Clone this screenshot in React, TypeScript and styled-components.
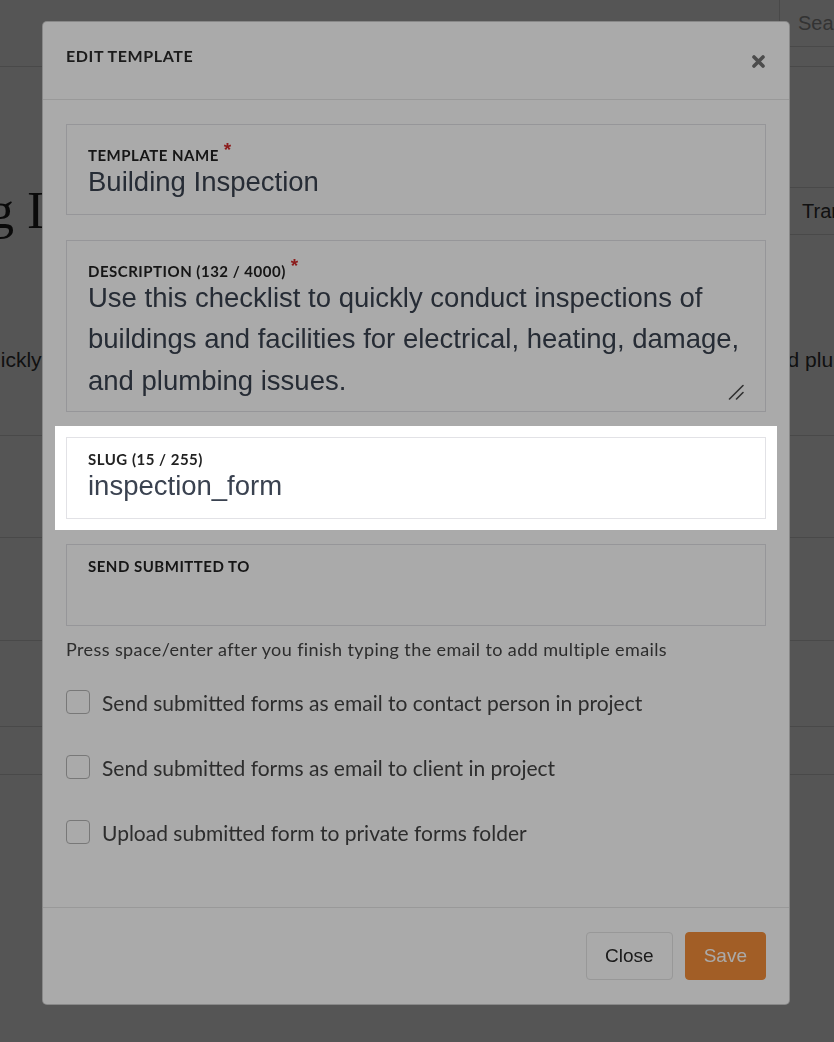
import React from "react";
import styled, { createGlobalStyle } from "styled-components";

const GlobalStyle = createGlobalStyle`
  html, body { margin: 0; padding: 0; }
  body {
    font-family: "Liberation Sans", Arial, sans-serif;
    background: #fff;
    overflow: hidden;
  }
  * { box-sizing: border-box; }
`;

/* ---------- background page ---------- */

const Page = styled.div`
  height: 1042px;
  overflow: hidden;
  background: #fff;
  color: #333;
`;

const TopBar = styled.header`
  height: 67px;
  border-bottom: 1px solid #dcdcdc;
  display: flex;
  justify-content: flex-end;
  align-items: flex-start;
`;

const SearchBox = styled.div`
  width: 55px;
  height: 47px;
  border-left: 1px solid #dcdcdc;
  border-bottom: 1px solid #dcdcdc;
  padding-left: 18px;
  font-size: 20px;
  line-height: 46px;
  color: #9a9a9a;
  white-space: nowrap;
  overflow: hidden;
`;

const TitleRow = styled.div`
  margin-top: 120px;
  height: 48px;
  display: flex;
  align-items: center;
  justify-content: space-between;
`;

const PageTitle = styled.h1`
  margin: 0 0 0 -168px;
  font-family: "Liberation Serif", "Times New Roman", serif;
  font-weight: 400;
  font-size: 52px;
  line-height: 48px;
  color: #1e1e1e;
  white-space: nowrap;
`;

const TransferButton = styled.div`
  flex-shrink: 0;
  width: 49px;
  height: 48px;
  border: 1px solid #dcdcdc;
  border-right: 0;
  padding-left: 16px;
  font-size: 20px;
  line-height: 46px;
  color: #333;
  white-space: nowrap;
  overflow: hidden;
`;

const Intro = styled.p`
  margin: 110px 0 0 -214px;
  font-size: 21px;
  line-height: 30px;
  color: #333;
  white-space: nowrap;
`;

const Table = styled.div`
  margin-top: 60px;
  border-top: 1px solid #dcdcdc;
`;

const TableRow = styled.div<{ $h: number }>`
  height: ${(p) => p.$h}px;
  border-bottom: 1px solid #dcdcdc;
`;

/* ---------- modal ---------- */

const Backdrop = styled.div`
  position: fixed;
  inset: 0;
  z-index: 10;
  background: rgba(0, 0, 0, 0.5);
  padding-top: 21px;
`;

const Modal = styled.div`
  width: 748px;
  height: 984px;
  margin-left: 42px;
  background: #fff;
  border: 1px solid rgba(0, 0, 0, 0.2);
  border-radius: 5px;
  display: flex;
  flex-direction: column;
  font-family: Lato, "Open Sans", sans-serif;
`;

const ModalHeader = styled.div`
  height: 78px;
  flex-shrink: 0;
  border-bottom: 1px solid #e6e6e6;
  padding: 24px 24px 0 23px;
  display: flex;
  align-items: flex-start;
  justify-content: space-between;
`;

const ModalTitle = styled.h4`
  margin: 0;
  font-family: Lato, sans-serif;
  font-weight: 700;
  font-size: 16px;
  line-height: 20px;
  letter-spacing: 0.6px;
  color: #2b2b2b;
  text-transform: uppercase;
`;

const CloseX = styled.button`
  margin-top: 9px;
  padding: 0;
  border: 0;
  background: transparent;
  width: 13px;
  height: 13px;
  display: flex;
  cursor: pointer;
`;

const ModalBody = styled.div`
  flex: 1;
  padding: 24px 23px 0;
  display: flex;
  flex-direction: column;
`;

const FieldStack = styled.div`
  display: flex;
  flex-direction: column;
  gap: 25px;
`;

const FieldBox = styled.div<{ $highlight?: boolean }>`
  position: relative;
  background: #fff;
  border: 1px solid #e2e2e6;
  padding: 12px 21px 14px;
  ${(p) =>
    p.$highlight &&
    `
    z-index: 1;
    box-shadow: 0 0 0 11px #fff, 0 0 0 3000px rgba(0, 0, 0, 0.333);
  `}
`;

const Label = styled.label<{ $required?: boolean }>`
  display: block;
  padding-top: ${(p) => (p.$required ? 9 : 0)}px;
  font-family: Lato, sans-serif;
  font-weight: 700;
  font-size: 15px;
  line-height: 18px;
  letter-spacing: 0.5px;
  color: #222;
  text-transform: uppercase;
`;

const Asterisk = styled.span`
  margin-left: 5px;
  font-family: "Liberation Sans", Arial, sans-serif;
  font-weight: 700;
  font-size: 19px;
  line-height: 0;
  vertical-align: 5px;
  color: #d22b2b;
`;

const ValueInput = styled.input`
  display: block;
  width: 100%;
  height: 36px;
  margin: 0;
  padding: 0;
  border: 0;
  outline: none;
  background: transparent;
  font-family: "Liberation Sans", Arial, sans-serif;
  font-size: 27.5px;
  line-height: 36px;
  color: #3a4250;
`;

const ValueArea = styled.textarea`
  display: block;
  width: 100%;
  height: 124px;
  margin: -3px 0 -4px;
  padding: 0;
  border: 0;
  outline: none;
  background: transparent;
  overflow: hidden;
  resize: none;
  font-family: "Liberation Sans", Arial, sans-serif;
  font-size: 27.5px;
  line-height: 1.5;
  color: #3a4250;
`;

const ResizeGrip = styled.svg`
  position: absolute;
  right: 21px;
  bottom: 11px;
  width: 16px;
  height: 16px;
  pointer-events: none;
`;

const Helper = styled.p`
  margin: 11px 0 0;
  font-size: 18px;
  line-height: 24px;
  letter-spacing: 0.4px;
  color: #444;
`;

const CheckList = styled.div`
  margin-top: 29px;
  display: flex;
  flex-direction: column;
  gap: 41px;
`;

const CheckRow = styled.label`
  display: flex;
  align-items: center;
  gap: 12px;
  height: 24px;
  font-size: 21px;
  color: #444;
`;

const CheckBox = styled.input.attrs({ type: "checkbox" })`
  appearance: none;
  flex-shrink: 0;
  width: 24px;
  height: 24px;
  margin: 0;
  border: 1px solid #b5b5b5;
  border-radius: 4px;
  background: #fff;
`;

const ModalFooter = styled.div`
  height: 97px;
  flex-shrink: 0;
  border-top: 1px solid #e6e6e6;
  padding: 24px 23px 0;
  display: flex;
  justify-content: flex-end;
  align-items: flex-start;
  gap: 12px;
`;

const Button = styled.button<{ $primary?: boolean }>`
  height: 48px;
  padding: 0 18px;
  border-radius: 4px;
  font-family: "Liberation Sans", Arial, sans-serif;
  font-size: 19px;
  border: 1px solid ${(p) => (p.$primary ? "#f48e39" : "#e4e4e4")};
  background: ${(p) => (p.$primary ? "#f48e39" : "#fff")};
  color: ${(p) => (p.$primary ? "#fff" : "#2a2a2a")};
  cursor: pointer;
`;

const description =
  "Use this checklist to quickly conduct inspections of buildings and facilities for electrical, heating, damage, and plumbing issues.";

export default function App() {
  return (
    <>
      <GlobalStyle />
      <Page>
        <TopBar>
          <SearchBox>Search</SearchBox>
        </TopBar>
        <TitleRow>
          <PageTitle>Building Inspection</PageTitle>
          <TransferButton>Transfer</TransferButton>
        </TitleRow>
        <Intro>{description}</Intro>
        <Table>
          {[102, 103, 86, 48].map((h, i) => (
            <TableRow key={i} $h={h} />
          ))}
        </Table>
      </Page>

      <Backdrop>
        <Modal>
          <ModalHeader>
            <ModalTitle>Edit Template</ModalTitle>
            <CloseX aria-label="Close">
              <svg width="13" height="13" viewBox="0 0 13 13">
                <path
                  d="M2 2 L11 11 M11 2 L2 11"
                  stroke="#737373"
                  strokeWidth="3.6"
                  strokeLinecap="round"
                />
              </svg>
            </CloseX>
          </ModalHeader>

          <ModalBody>
            <FieldStack>
              <FieldBox>
                <Label $required>
                  Template Name<Asterisk>*</Asterisk>
                </Label>
                <ValueInput defaultValue="Building Inspection" />
              </FieldBox>
              <FieldBox>
                <Label $required>
                  Description (132 / 4000)<Asterisk>*</Asterisk>
                </Label>
                <ValueArea defaultValue={description} />
                <ResizeGrip viewBox="0 0 16 16">
                  <path
                    d="M1.5 15 L15 1.5 M8.5 15 L15 8.5"
                    stroke="#4a4a4a"
                    strokeWidth="1.6"
                    strokeLinecap="round"
                  />
                </ResizeGrip>
              </FieldBox>
              <FieldBox $highlight>
                <Label>Slug (15 / 255)</Label>
                <ValueInput defaultValue="inspection_form" />
              </FieldBox>
              <FieldBox>
                <Label>Send submitted to</Label>
                <ValueInput defaultValue="" />
              </FieldBox>
            </FieldStack>

            <Helper>
              Press space/enter after you finish typing the email to add multiple emails
            </Helper>

            <CheckList>
              <CheckRow>
                <CheckBox />
                Send submitted forms as email to contact person in project
              </CheckRow>
              <CheckRow>
                <CheckBox />
                Send submitted forms as email to client in project
              </CheckRow>
              <CheckRow>
                <CheckBox />
                Upload submitted form to private forms folder
              </CheckRow>
            </CheckList>
          </ModalBody>

          <ModalFooter>
            <Button>Close</Button>
            <Button $primary>Save</Button>
          </ModalFooter>
        </Modal>
      </Backdrop>
    </>
  );
}
